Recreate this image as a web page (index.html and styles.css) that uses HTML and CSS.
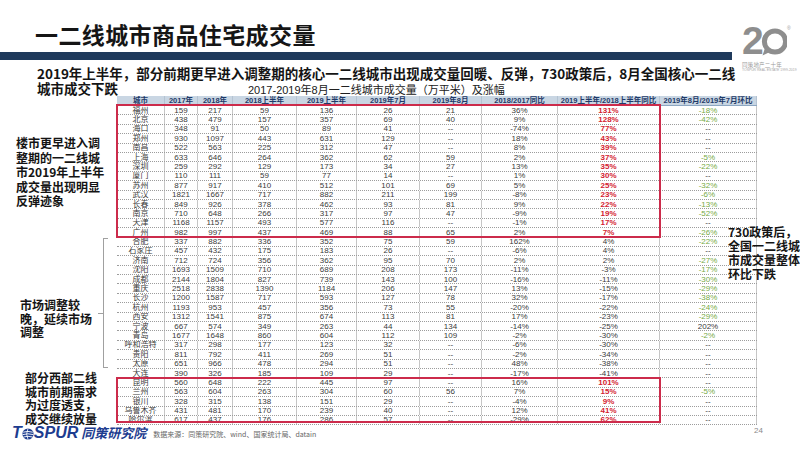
FILE: index.html
```html
<!DOCTYPE html>
<html lang="zh-CN">
<head>
<meta charset="utf-8">
<title>一二线城市商品住宅成交量</title>
<link rel="stylesheet" href="styles.css">
</head>
<body>
<header class="top">
  <div class="title-area">
    <h1 class="title">一二线城市商品住宅成交量</h1>
    <div class="bar"></div>
  </div>
  <div class="logo">
    <div class="logo-mark">
      <span class="logo-two">2</span>
      <svg class="logo-ring" width="26" height="30" viewBox="0 0 26 30" aria-hidden="true">
        <circle cx="14" cy="15.5" r="10.6" fill="none" stroke="#8e8e8e" stroke-width="5"/>
        <polygon points="1.5,29.5 5,19 11,25" fill="#8e8e8e"/>
      </svg>
      <span class="logo-reg">®</span>
    </div>
    <div class="logo-cn">同策地产二十年</div>
    <div class="logo-en">TOSPUR REAL ESTATE 1999-2019</div>
  </div>
</header>

<div class="lead">
  <p class="lead-1">2019年上半年，部分前期更早进入调整期的核心一二线城市出现成交量回暖、反弹，730政策后，8月全国核心一二线</p>
  <div class="lead-row">
    <span class="lead-2">城市成交下跌</span>
    <span class="caption">2017-2019年8月一二线城市成交量（万平米）及涨幅</span>
  </div>
</div>

<main class="main">
  <aside class="notes">
    <p class="note-1">楼市更早进入调<br>整期的一二线城<br>市2019年上半年<br>成交量出现明显<br>反弹迹象</p>
    <div class="note-group">
      <p class="note-2">市场调整较<br>晚，延续市场<br>调整</p>
      <div class="bracket"></div>
    </div>
    <p class="note-3">部分西部二线<br>城市前期需求<br>为过度透支，<br>成交继续放量</p>
  </aside>

  <section class="sheet">
    <div class="rows">
      <div class="th"><span>城市</span><span>2017年</span><span>2018年</span><span>2018上半年</span><span>2019上半年</span><span>2019年7月</span><span>2019年8月</span><span>2018/2017同比</span><span>2019上半年/2018上半年同比</span><span>2019年8月/2019年7月环比</span></div>
      <div class="tr"><span>福州</span><span>159</span><span>217</span><span>59</span><span>136</span><span>26</span><span>21</span><span>36%</span><span class="hi">131%</span><span class="dn">-18%</span></div>
      <div class="tr"><span>北京</span><span>438</span><span>479</span><span>157</span><span>357</span><span>69</span><span>40</span><span>9%</span><span class="hi">128%</span><span class="dn">-42%</span></div>
      <div class="tr"><span>海口</span><span>348</span><span>91</span><span>50</span><span>89</span><span>41</span><span>--</span><span>-74%</span><span class="hi">77%</span><span>--</span></div>
      <div class="tr"><span>郑州</span><span>930</span><span>1097</span><span>443</span><span>631</span><span>129</span><span>--</span><span>18%</span><span class="hi">43%</span><span>--</span></div>
      <div class="tr"><span>南昌</span><span>522</span><span>563</span><span>225</span><span>312</span><span>47</span><span>--</span><span>8%</span><span class="hi">39%</span><span>--</span></div>
      <div class="tr"><span>上海</span><span>633</span><span>646</span><span>264</span><span>362</span><span>62</span><span>59</span><span>2%</span><span class="hi">37%</span><span class="dn">-5%</span></div>
      <div class="tr"><span>深圳</span><span>259</span><span>292</span><span>129</span><span>173</span><span>34</span><span>27</span><span>13%</span><span class="hi">35%</span><span class="dn">-22%</span></div>
      <div class="tr"><span>厦门</span><span>110</span><span>111</span><span>59</span><span>77</span><span>14</span><span>--</span><span>1%</span><span class="hi">30%</span><span>--</span></div>
      <div class="tr"><span>苏州</span><span>877</span><span>917</span><span>410</span><span>512</span><span>101</span><span>69</span><span>5%</span><span class="hi">25%</span><span class="dn">-32%</span></div>
      <div class="tr"><span>武汉</span><span>1821</span><span>1667</span><span>717</span><span>882</span><span>211</span><span>199</span><span>-8%</span><span class="hi">23%</span><span class="dn">-6%</span></div>
      <div class="tr"><span>长春</span><span>849</span><span>926</span><span>378</span><span>462</span><span>93</span><span>81</span><span>9%</span><span class="hi">22%</span><span class="dn">-13%</span></div>
      <div class="tr"><span>南京</span><span>710</span><span>648</span><span>266</span><span>317</span><span>97</span><span>47</span><span>-9%</span><span class="hi">19%</span><span class="dn">-52%</span></div>
      <div class="tr"><span>天津</span><span>1168</span><span>1157</span><span>493</span><span>577</span><span>116</span><span>--</span><span>-1%</span><span class="hi">17%</span><span>--</span></div>
      <div class="tr"><span>广州</span><span>982</span><span>997</span><span>437</span><span>469</span><span>88</span><span>65</span><span>2%</span><span class="hi">7%</span><span class="dn">-26%</span></div>
      <div class="tr"><span>合肥</span><span>337</span><span>882</span><span>336</span><span>352</span><span>75</span><span>59</span><span>162%</span><span>4%</span><span class="dn">-22%</span></div>
      <div class="tr"><span>石家庄</span><span>457</span><span>432</span><span>175</span><span>183</span><span>26</span><span>--</span><span>-6%</span><span>4%</span><span>--</span></div>
      <div class="tr"><span>济南</span><span>712</span><span>724</span><span>356</span><span>362</span><span>95</span><span>70</span><span>2%</span><span>2%</span><span class="dn">-27%</span></div>
      <div class="tr"><span>沈阳</span><span>1693</span><span>1509</span><span>710</span><span>689</span><span>208</span><span>173</span><span>-11%</span><span>-3%</span><span class="dn">-17%</span></div>
      <div class="tr"><span>成都</span><span>2144</span><span>1804</span><span>827</span><span>739</span><span>143</span><span>100</span><span>-16%</span><span>-11%</span><span class="dn">-30%</span></div>
      <div class="tr"><span>重庆</span><span>2518</span><span>2838</span><span>1390</span><span>1184</span><span>206</span><span>147</span><span>13%</span><span>-15%</span><span class="dn">-29%</span></div>
      <div class="tr"><span>长沙</span><span>1200</span><span>1587</span><span>717</span><span>593</span><span>127</span><span>78</span><span>32%</span><span>-17%</span><span class="dn">-38%</span></div>
      <div class="tr"><span>杭州</span><span>1193</span><span>953</span><span>457</span><span>356</span><span>73</span><span>55</span><span>-20%</span><span>-22%</span><span class="dn">-24%</span></div>
      <div class="tr"><span>西安</span><span>1312</span><span>1541</span><span>875</span><span>674</span><span>113</span><span>81</span><span>17%</span><span>-23%</span><span class="dn">-29%</span></div>
      <div class="tr"><span>宁波</span><span>667</span><span>574</span><span>349</span><span>263</span><span>44</span><span>134</span><span>-14%</span><span>-25%</span><span>202%</span></div>
      <div class="tr"><span>青岛</span><span>1677</span><span>1648</span><span>860</span><span>604</span><span>112</span><span>109</span><span>-2%</span><span>-30%</span><span class="dn">-2%</span></div>
      <div class="tr"><span>呼和浩特</span><span>317</span><span>298</span><span>177</span><span>123</span><span>32</span><span>--</span><span>-6%</span><span>-30%</span><span>--</span></div>
      <div class="tr"><span>贵阳</span><span>811</span><span>792</span><span>411</span><span>269</span><span>51</span><span>--</span><span>-2%</span><span>-34%</span><span>--</span></div>
      <div class="tr"><span>太原</span><span>651</span><span>966</span><span>478</span><span>294</span><span>51</span><span>--</span><span>48%</span><span>-38%</span><span>--</span></div>
      <div class="tr"><span>大连</span><span>390</span><span>326</span><span>185</span><span>109</span><span>29</span><span>--</span><span>-17%</span><span>-41%</span><span>--</span></div>
      <div class="tr"><span>昆明</span><span>560</span><span>648</span><span>222</span><span>445</span><span>97</span><span>--</span><span>16%</span><span class="hi">101%</span><span>--</span></div>
      <div class="tr"><span>兰州</span><span>563</span><span>604</span><span>263</span><span>304</span><span>60</span><span>56</span><span>7%</span><span class="hi">15%</span><span class="dn">-5%</span></div>
      <div class="tr"><span>银川</span><span>328</span><span>315</span><span>138</span><span>151</span><span>29</span><span>--</span><span>-4%</span><span class="hi">9%</span><span>--</span></div>
      <div class="tr"><span>乌鲁木齐</span><span>431</span><span>481</span><span>170</span><span>239</span><span>40</span><span>--</span><span>12%</span><span class="hi">41%</span><span>--</span></div>
      <div class="tr"><span>哈尔滨</span><span>617</span><span>437</span><span>176</span><span>286</span><span>57</span><span>--</span><span>-29%</span><span class="hi">62%</span><span>--</span></div>
    </div>
    <div class="box box-core"></div>
    <div class="box box-west"></div>
  </section>

  <p class="callout">730政策后，<br>全国一二线城<br>市成交量整体<br>环比下跌</p>
</main>

<footer class="foot">
  <div class="brand">
    <span>T</span><svg class="globe" width="12" height="12" viewBox="0 0 12 12" aria-hidden="true">
      <circle cx="6" cy="6" r="5.6" fill="#1d3c8f"/>
      <path d="M1.2 4.2 Q6 2.6 10.8 4.2 M0.6 6.6 Q6 5 11.4 6.6 M1.4 9 Q6 7.6 10.6 9" stroke="#fff" stroke-width="0.9" fill="none"/>
      <path d="M6 0.6 Q3.2 6 6 11.4" stroke="#fff" stroke-width="0.8" fill="none"/>
    </svg><span>SPUR</span>
  </div>
  <span class="brand-cn">同策研究院</span>
  <span class="source">数据来源：同策研究院、wind、国家统计局、datain</span>
  <span class="page">24</span>
</footer>
</body>
</html>
```
FILE: styles.css
```css
* {
  box-sizing: border-box;
  margin: 0;
  padding: 0;
}

html,
body {
  width: 800px;
  height: 450px;
  overflow: hidden;
  background: #ffffff;
}

body {
  font-family: "Noto Sans CJK SC", "Noto Sans", sans-serif;
  color: #141414;
  position: relative;
}

/* ---------- header ---------- */
.top {
  display: flex;
  height: 60px;
}

.title-area {
  width: 732px;
  padding-top: 23px;
}

.title {
  font-size: 23px;
  line-height: 23px;
  font-weight: 700;
  padding-left: 35px;
  letter-spacing: 0.4px;
  color: #151515;
}

.bar {
  height: 8px;
  margin-top: 6px;
  background: #1f3a5c;
}

.logo {
  margin-left: 10px;
  padding-top: 22px;
  display: flex;
  flex-direction: column;
}

.logo-mark {
  display: flex;
  align-items: flex-end;
  height: 37px;
  position: relative;
}

.logo-two {
  font-family: "Liberation Sans", sans-serif;
  font-weight: 700;
  font-size: 39px;
  line-height: 37px;
  color: #8e8e8e;
}

.logo-ring {
  margin-left: -3px;
  margin-bottom: 3px;
}

.logo-reg {
  position: absolute;
  left: 45px;
  top: 4px;
  font-family: "Liberation Sans", sans-serif;
  font-size: 5px;
  line-height: 5px;
  color: #9a9a9a;
}

.logo-cn {
  margin-top: 3px;
  font-size: 5.5px;
  line-height: 6px;
  color: #9c9c9c;
  white-space: nowrap;
  letter-spacing: 0.2px;
}

.logo-en {
  font-family: "Liberation Sans", sans-serif;
  font-size: 3.4px;
  line-height: 5px;
  color: #a4a4a4;
  white-space: nowrap;
}

/* ---------- lead ---------- */
.lead {
  margin-top: 6px;
  padding-left: 37px;
  font-size: 13.5px;
  line-height: 15px;
  font-weight: 700;
  color: #141414;
}

.lead-1 {
  white-space: nowrap;
}

.lead-row {
  display: flex;
  align-items: baseline;
  height: 15px;
  white-space: nowrap;
}

.caption {
  margin-left: 130px;
  font-family: "Liberation Sans Narrow", "Liberation Sans", "Noto Sans CJK SC", sans-serif;
  font-size: 11px;
  font-weight: 400;
  color: #202020;
}

/* ---------- main ---------- */
.main {
  display: grid;
  grid-template-columns: 117px 640px 43px;
  height: 329px;
  position: relative;
}

.notes {
  display: flex;
  flex-direction: column;
  font-size: 12px;
  font-weight: 700;
  color: #141414;
  white-space: nowrap;
}

.note-1 {
  margin-top: 40px;
  padding-left: 16px;
  line-height: 14.5px;
}

.note-group {
  display: flex;
  height: 130px;
  margin-top: 29.5px;
}

.note-2 {
  width: 103px;
  padding-left: 20px;
  margin-top: 60px;
  line-height: 13.5px;
}

.bracket {
  width: 5px;
  border: 1px solid #a0a0a0;
  border-right: none;
  position: relative;
}

.bracket::before {
  content: "";
  position: absolute;
  left: -6px;
  top: 74px;
  width: 5px;
  height: 1px;
  background: #a0a0a0;
}

.note-3 {
  margin-top: 3px;
  padding-left: 25px;
  line-height: 13.5px;
}

/* ---------- sheet ---------- */
.sheet {
  position: relative;
  font-family: "Liberation Sans Narrow", "Liberation Sans", "Noto Sans CJK SC", sans-serif;
}

.rows {
  height: 329px;
  overflow: hidden;
}

.th,
.tr {
  display: grid;
  grid-template-columns: 48px 33px 35px 64px 60px 63px 62px 76px 102px 97px;
}

.th {
  height: 10px;
  background: #c9d6e3;
  border-bottom: 1px solid #8da7c2;
  font-size: 7.5px;
  line-height: 9px;
  font-weight: 700;
  color: #1f3a68;
}

.tr {
  height: 9.4px;
  border-bottom: 1px dotted #9c9c9c;
  font-size: 8px;
  line-height: 8.4px;
  color: #3a3a3a;
}

.th span,
.tr span {
  text-align: center;
  white-space: nowrap;
  overflow: hidden;
  border-right: 1px solid #c6c6c6;
}

.tr span {
  padding-top: 0.6px;
}

.th span {
  border-right-color: #b4c3d2;
}

.tr .hi {
  color: #d3222f;
  font-weight: 700;
}

.tr .dn {
  color: #76aa46;
}

.box {
  position: absolute;
  left: -1px;
  width: 545px;
  border: 2px solid #cc2b4b;
  pointer-events: none;
}

.box-core {
  top: 8px;
  height: 134px;
}

.box-west {
  top: 280.8px;
  height: 46.7px;
}

.callout {
  position: absolute;
  left: 728px;
  top: 129px;
  font-size: 12px;
  line-height: 14px;
  font-weight: 700;
  color: #141414;
  white-space: nowrap;
}

/* ---------- footer ---------- */
.foot {
  display: flex;
  align-items: flex-start;
  height: 25px;
  padding-left: 12px;
}

.brand {
  display: flex;
  align-items: center;
  font-family: "Liberation Sans", sans-serif;
  font-size: 16px;
  line-height: 16px;
  font-weight: 700;
  font-style: italic;
  color: #1d3c8f;
}

.globe {
  margin: 1px 0 0 0;
}

.brand-cn {
  margin-left: 3px;
  font-size: 13px;
  line-height: 16px;
  font-weight: 700;
  font-style: italic;
  color: #1d3c8f;
}

.source {
  margin-left: 7px;
  margin-top: 5px;
  font-size: 7px;
  line-height: 9px;
  color: #666666;
  white-space: nowrap;
}

.page {
  margin-left: auto;
  margin-right: 37px;
  margin-top: 1px;
  font-family: "Liberation Sans", sans-serif;
  font-size: 8px;
  line-height: 9px;
  color: #8a8a8a;
}
```
